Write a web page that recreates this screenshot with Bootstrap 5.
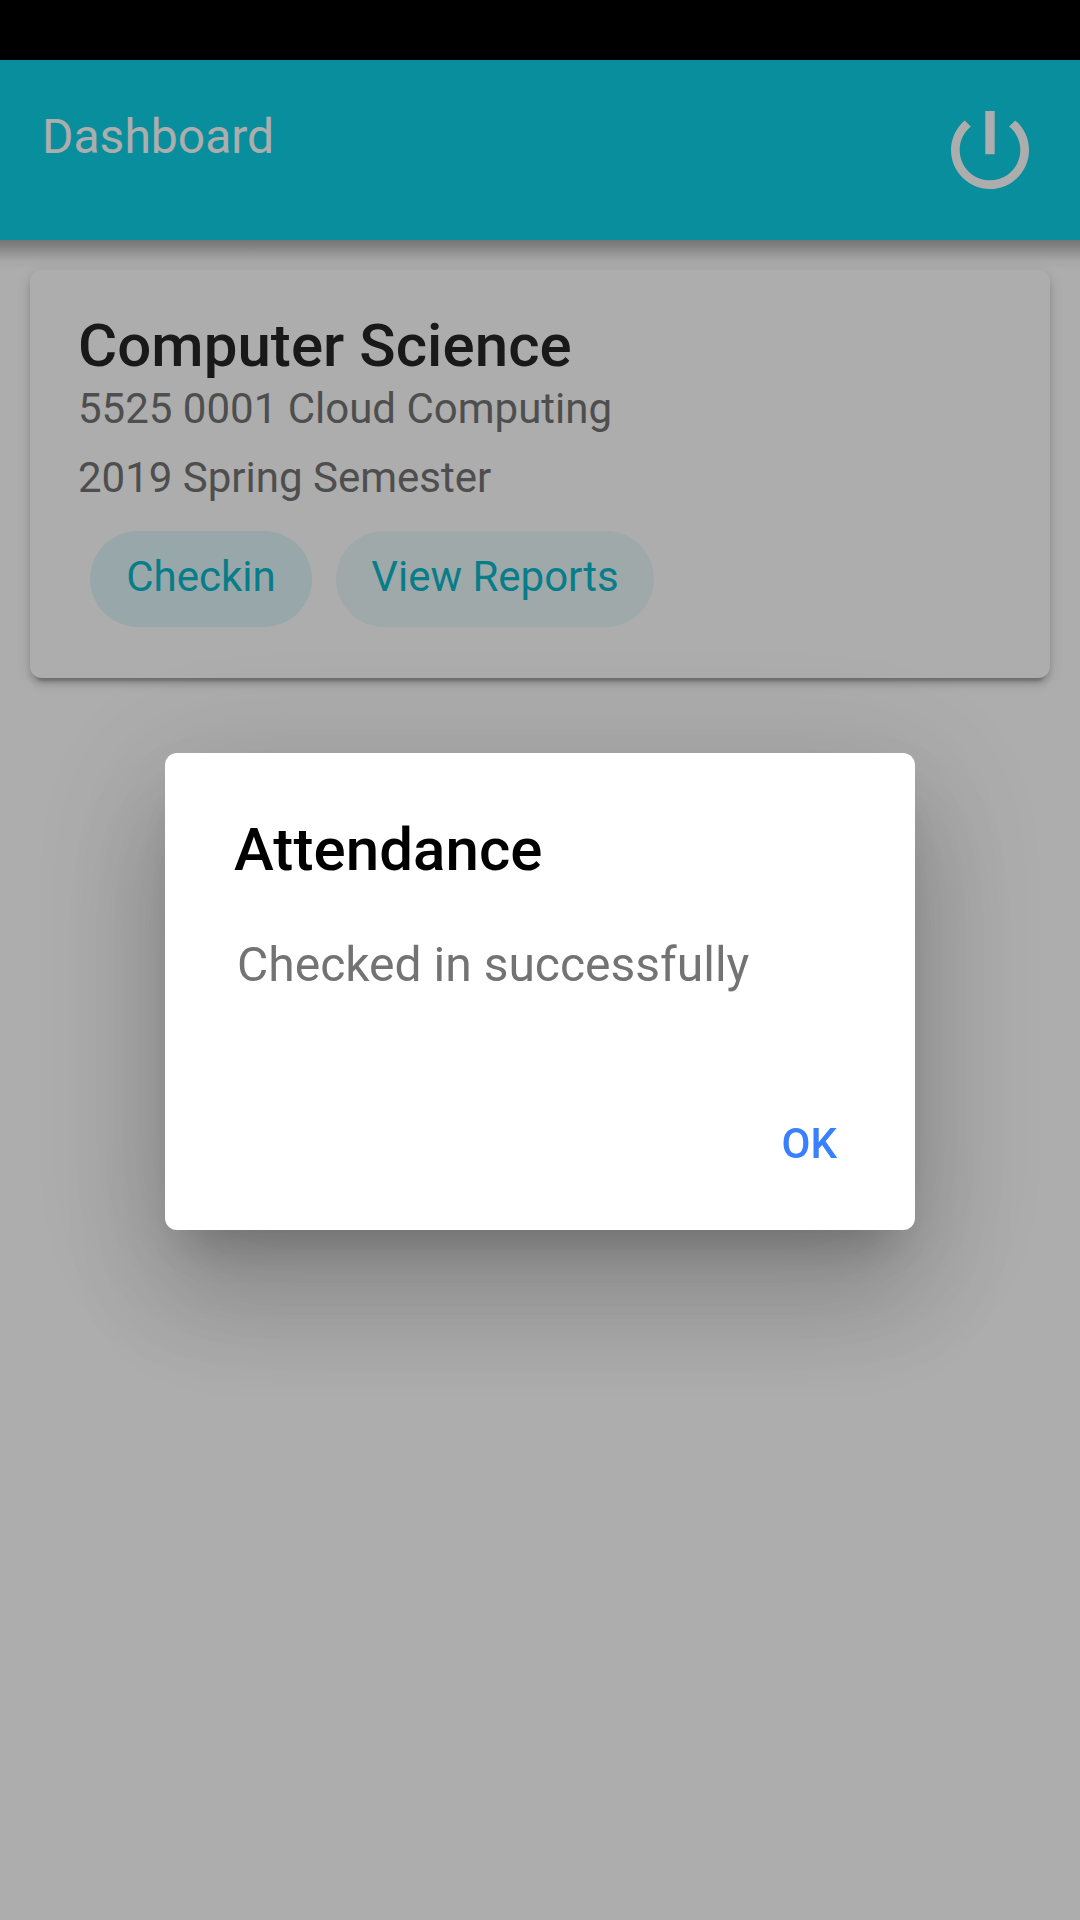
<!DOCTYPE html>
<html lang="en">
<head>
<meta charset="utf-8">
<meta name="viewport" content="width=device-width, initial-scale=1">
<title>Dashboard</title>
<link href="https://cdn.jsdelivr.net/npm/bootstrap@5.3.0/dist/css/bootstrap.min.css" rel="stylesheet">
<style>
body{font-family:Roboto,"Liberation Sans",sans-serif;background:#fff;line-height:1.2;overflow:hidden;min-height:1920px}
.status-strip{height:60px;background:#000}
.app-bar{height:180px;padding:38px 38px 0 42px;background:#0cd1e8;position:relative;z-index:2}
.app-bar::after{content:"";position:absolute;left:0;right:0;top:100%;height:30px;
 background:linear-gradient(rgba(0,0,0,.32),rgba(0,0,0,.25) 20%,rgba(0,0,0,.12) 47%,rgba(0,0,0,.035) 70%,transparent)}
.app-title{font-size:48px;margin-top:10px;color:#fff}
.power-btn svg{display:block;width:104px;height:104px;fill:#fff}
.course-card{margin:30px 30px 0;height:408px;border-radius:12px;padding:40px 48px 0;background:#fff;
 box-shadow:0 9px 3px -6px rgba(0,0,0,.2),0 6px 6px 0 rgba(0,0,0,.14),0 3px 15px 0 rgba(0,0,0,.12)}
.course-title{font-size:60px;font-weight:500;line-height:72px;letter-spacing:.06px;color:#262626}
.course-lines{margin-top:2px}
.course-line{font-size:42px;line-height:50px;color:#747474}
.course-line+.course-line{margin-top:19px}
.chip-row{margin:28px 0 0 12px;gap:24px}
.chip{width:222px;height:96px;padding:0 0 4px;border-radius:48px;font-size:42px;line-height:50px;color:#0bb8cc;background:rgba(11,184,204,.08);border:0}
.chip-on{background:rgba(11,184,204,.12)}
.chip-wide{width:318px}
.dim{--bs-backdrop-opacity:.32}
.dim.modal-backdrop{height:1920px;top:0}
.alert-box{width:750px;max-width:none;margin:753px auto 0}
.alert-box .modal-content{height:477px;border:0;border-radius:12px;
 box-shadow:0 33px 45px -21px rgba(0,0,0,.2),0 72px 114px 9px rgba(0,0,0,.14),0 27px 138px 24px rgba(0,0,0,.12)}
.alert-title{font-size:60px;font-weight:500;line-height:72px;letter-spacing:.08px;padding:61px 69px 0;color:#000}
.alert-text{font-size:48px;line-height:58px;padding:50px 72px 0;color:#737373}
.ok-btn{font-size:42px;font-weight:500;line-height:50px;color:#3880ff;padding:0;border:0;margin:125px 78px 0 0}
</style>
</head>
<body>
<div class="status-strip"></div>
<header class="app-bar d-flex justify-content-between align-items-start">
  <div class="app-title">Dashboard</div>
  <button class="power-btn btn p-0 border-0" aria-label="Log out">
    <svg viewBox="0 0 24 24"><path d="M13.08 3h-2.16v10h2.16V3zm4.75 2.17l-1.42 1.42C17.99 7.86 19 9.81 19 12c0 3.87-3.13 7-7 7s-7-3.13-7-7c0-2.19 1.01-4.14 2.58-5.42L6.17 5.17C4.23 6.82 3 9.26 3 12c0 4.97 4.03 9 9 9s9-4.03 9-9c0-2.74-1.23-5.18-3.17-6.83z"/></svg>
  </button>
</header>
<main>
  <section class="card course-card border-0">
    <h2 class="course-title m-0">Computer Science</h2>
    <div class="course-lines d-flex flex-column">
      <div class="course-line">5525 0001 Cloud Computing</div>
      <div class="course-line">2019 Spring Semester</div>
    </div>
    <div class="chip-row d-flex">
      <button class="chip chip-on">Checkin</button>
      <button class="chip chip-wide">View Reports</button>
    </div>
  </section>
</main>
<div class="modal-backdrop show dim"></div>
<div class="modal d-block overflow-hidden" role="alertdialog" aria-modal="true">
  <div class="modal-dialog alert-box">
    <div class="modal-content">
      <h3 class="alert-title m-0">Attendance</h3>
      <div class="alert-text">Checked in successfully</div>
      <div class="d-flex justify-content-end">
        <button class="btn ok-btn">OK</button>
      </div>
    </div>
  </div>
</div>
<script src="https://cdn.jsdelivr.net/npm/bootstrap@5.3.0/dist/js/bootstrap.bundle.min.js"></script>
</body>
</html>
